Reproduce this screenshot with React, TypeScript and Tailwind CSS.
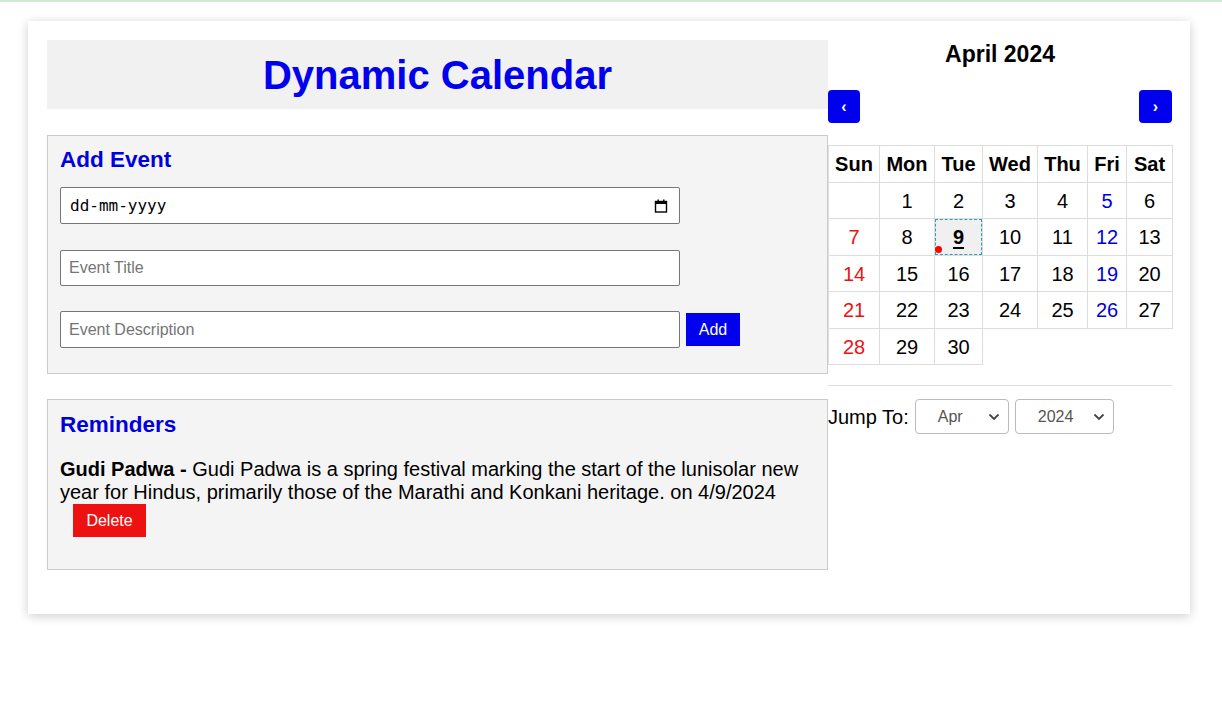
import React from "react";

const weeks: (number | null)[][] = [
  [null, 1, 2, 3, 4, 5, 6],
  [7, 8, 9, 10, 11, 12, 13],
  [14, 15, 16, 17, 18, 19, 20],
  [21, 22, 23, 24, 25, 26, 27],
  [28, 29, 30],
];
const rowH = ["h-[36px]", "h-[37px]", "h-[36px]", "h-[37px]", "h-[36px]"];
const days = ["Sun", "Mon", "Tue", "Wed", "Thu", "Fri", "Sat"];
const colW = [51, 55, 48, 55, 50, 39, 46];

function Chevron() {
  return (
    <svg width="12" height="8" viewBox="0 0 12 8" className="shrink-0">
      <path d="M1.5 1.5 L6 6 L10.5 1.5" fill="none" stroke="#444" strokeWidth="1.8" />
    </svg>
  );
}

export default function App() {
  return (
    <div
      className="min-h-[712px] bg-white border-t-2 border-[#cfe8d0] pt-[19px]"
      style={{ fontFamily: '"Liberation Sans", Arial, sans-serif' }}
    >
      <div className="ml-[28px] w-[1162px] bg-white shadow-[0_2px_10px_rgba(0,0,0,0.2)] pl-[19px] pr-[18px] pt-[19px] pb-[44px] flex">
        {/* Left column */}
        <div className="w-[781px] shrink-0">
          <div className="h-[69px] bg-[#f1f1f1] flex items-center justify-center">
            <h1 className="text-[40px] font-bold text-[#0000ee] leading-none">Dynamic Calendar</h1>
          </div>

          <div className="mt-[26px] h-[239px] bg-[#f4f4f4] border border-[#cccccc] px-[12px] pt-[11px]">
            <h2 className="text-[22.5px] font-bold text-[#0000dd] leading-[26px]">Add Event</h2>
            <div className="mt-[14px] w-[620px] h-[37px] bg-white border border-[#767676] rounded-[2px] flex items-center justify-between pl-[9px] pr-[11px]">
              <span
                className="text-[16px] text-black"
                style={{ fontFamily: '"DejaVu Sans Mono", "Liberation Mono", monospace' }}
              >
                dd-mm-yyyy
              </span>
              <svg width="14" height="14" viewBox="0 0 14 14">
                <rect x="1.5" y="2.5" width="11" height="10.5" fill="none" stroke="#000" strokeWidth="1.4" />
                <rect x="1.5" y="2.5" width="11" height="2.5" fill="#000" />
                <rect x="3.5" y="0.5" width="1.4" height="3" fill="#000" />
                <rect x="9.1" y="0.5" width="1.4" height="3" fill="#000" />
              </svg>
            </div>
            <div className="mt-[26px] w-[620px] h-[36px] bg-white border border-[#767676] rounded-[2px] flex items-center pl-[8px]">
              <span className="text-[16px] text-[#757575]">Event Title</span>
            </div>
            <div className="mt-[25px] flex items-center">
              <div className="w-[620px] h-[37px] bg-white border border-[#767676] rounded-[2px] flex items-center pl-[8px]">
                <span className="text-[16px] text-[#757575]">Event Description</span>
              </div>
              <div className="ml-[6px] w-[54px] h-[33px] bg-[#0000ee] text-white text-[16px] flex items-center justify-center">
                Add
              </div>
            </div>
          </div>

          <div className="mt-[25px] h-[171px] bg-[#f4f4f4] border border-[#cccccc] px-[12px] pt-[12px]">
            <h2 className="text-[22.5px] font-bold text-[#0000dd] leading-[26px]">Reminders</h2>
            <p className="mt-[20px] text-[20px] leading-[23px] text-black pr-[10px]">
              <b>Gudi Padwa -</b> Gudi Padwa is a spring festival marking the start of the lunisolar new year for
              Hindus, primarily those of the Marathi and Konkani heritage. on 4/9/2024
            </p>
            <div className="ml-[13px] mt-[0px] w-[73px] h-[33px] bg-[#ee1111] text-white text-[16px] flex items-center justify-center">
              Delete
            </div>
          </div>
        </div>

        {/* Right column */}
        <div className="w-[344px] shrink-0">
          <h2 className="text-[23px] font-bold text-black text-center leading-[26px] mt-[1px]">April 2024</h2>
          <div className="mt-[23px] flex justify-between">
            <div className="w-[32px] h-[33px] bg-[#0000ee] rounded-[4px] text-white flex items-center justify-center text-[16px] font-bold">
              ‹
            </div>
            <div className="w-[33px] h-[33px] bg-[#0000ee] rounded-[4px] text-white flex items-center justify-center text-[16px] font-bold">
              ›
            </div>
          </div>
          <table className="mt-[22px] border-collapse table-fixed w-[344px]">
            <colgroup>
              {colW.map((w, i) => (
                <col key={i} style={{ width: w }} />
              ))}
            </colgroup>
            <thead>
              <tr className="h-[37px]">
                {days.map((d) => (
                  <th key={d} className="border border-[#dddddd] text-[20px] font-bold text-black text-center p-0">
                    {d}
                  </th>
                ))}
              </tr>
            </thead>
            <tbody>
              {weeks.map((w, ri) => (
                <tr key={ri} className={rowH[ri]}>
                  {w.map((d, ci) => {
                    const color = ci === 0 && d ? "text-[#ee1111]" : ci === 5 ? "text-[#0000dd]" : "text-black";
                    if (d === 9) {
                      return (
                        <td key={ci} className="p-0 border border-[#dddddd] relative">
                          <div className="absolute inset-0 bg-[#f0f0f0] border border-dashed border-[#2aa0b0] flex items-center justify-center">
                            <span className="text-[20px] font-bold underline underline-offset-[3px] decoration-2 text-black">9</span>
                            <span className="absolute left-[-1px] bottom-[1px] w-[7px] h-[7px] rounded-full bg-[#ff0000]" />
                          </div>
                        </td>
                      );
                    }
                    return (
                      <td key={ci} className={`p-0 border border-[#dddddd] text-center text-[20px] ${color}`}>
                        {d ?? ""}
                      </td>
                    );
                  })}
                </tr>
              ))}
            </tbody>
          </table>
          <div className="mt-[20px] border-t border-[#dddddd]" />
          <div className="mt-[13px] flex items-center">
            <span className="text-[20px] text-black">Jump To:</span>
            <div className="ml-[6px] w-[94px] h-[35px] border border-[#bbbbbb] rounded-[4px] bg-white flex items-center justify-between pl-[22px] pr-[8px]">
              <span className="text-[16px] text-[#555555]">Apr</span>
              <Chevron />
            </div>
            <div className="ml-[6px] w-[99px] h-[35px] border border-[#bbbbbb] rounded-[4px] bg-white flex items-center justify-between pl-[22px] pr-[8px]">
              <span className="text-[16px] text-[#555555]">2024</span>
              <Chevron />
            </div>
          </div>
        </div>
      </div>
    </div>
  );
}
